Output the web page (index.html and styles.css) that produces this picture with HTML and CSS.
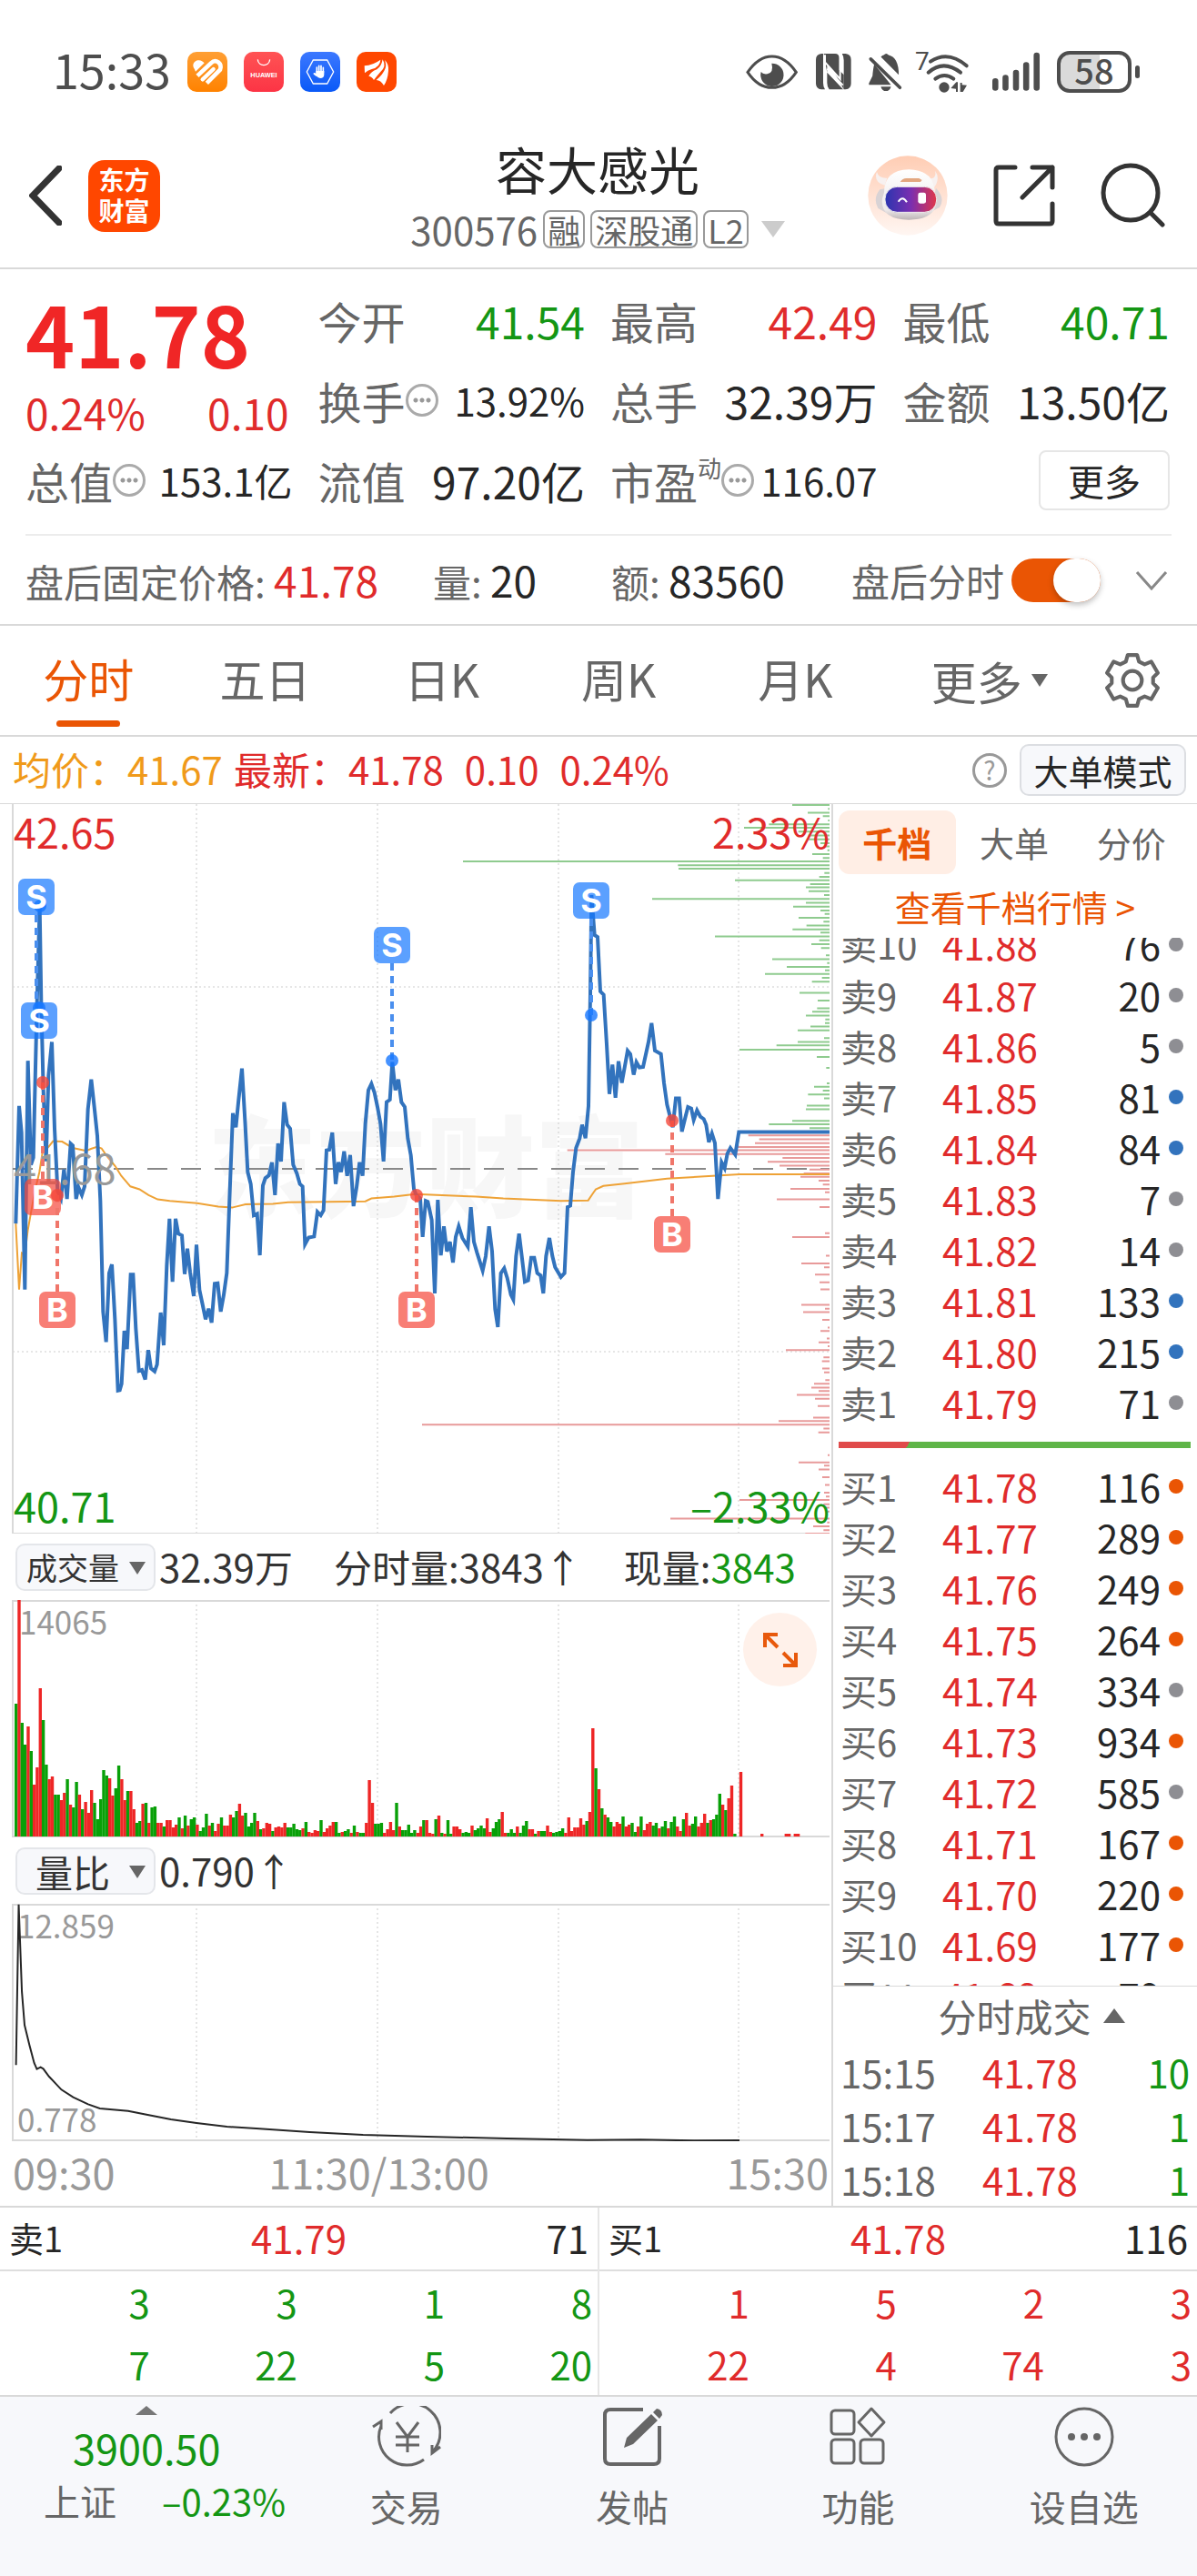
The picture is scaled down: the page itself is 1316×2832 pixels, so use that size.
FILE: index.html
```html
<!DOCTYPE html>
<html lang="zh-CN">
<head>
  <meta charset="UTF-8">
  <meta name="viewport" content="width=device-width, initial-scale=1.0">
  <title>容大感光 300576</title>
  <link rel="stylesheet" href="styles.css">
</head>
<body>
  <div class="status-bar">
    <div class="status-left">
      <span class="clock">15:33</span>
      <svg class="app-icon" viewBox="0 0 132 132">
        <defs><linearGradient id="gOrange" x1="0" y1="0" x2="0" y2="1"><stop offset="0" stop-color="#ff9f34"/><stop offset="1" stop-color="#ff8200"/></linearGradient></defs>
        <rect width="132" height="132" rx="30" fill="url(#gOrange)"/>
        <path d="M24 58C14 44 20 32 34 28c10-2 17 4 22 9L27 65Z" fill="#fff"/>
        <path d="M33 79 78 37q12-11 24-3 12 10 6 25L64 103" fill="none" stroke="#fff" stroke-width="14"/>
        <path d="M50 91 86 57" stroke="#fff" stroke-width="13" stroke-linecap="round"/>
      </svg>
      <svg class="app-icon" viewBox="0 0 132 132">
        <defs><linearGradient id="gRed" x1="0" y1="0" x2="0" y2="1"><stop offset="0" stop-color="#ff5354"/><stop offset="1" stop-color="#fc3445"/></linearGradient></defs>
        <rect width="132" height="132" rx="30" fill="url(#gRed)"/>
        <path d="M46 25c2 25 38 25 40 0" fill="none" stroke="#fff" stroke-width="4"/>
        <text class="tiny-brand" x="66" y="84" text-anchor="middle">HUAWEI</text>
      </svg>
      <svg class="app-icon" viewBox="0 0 132 132">
        <defs><linearGradient id="gBlue" x1="0" y1="0" x2="0" y2="1"><stop offset="0" stop-color="#3c78ff"/><stop offset="1" stop-color="#0a59f7"/></linearGradient></defs>
        <rect width="132" height="132" rx="30" fill="url(#gBlue)"/>
        <path d="M43 27H89L110 66 89 105H43L22 66Z" fill="none" stroke="#fff" stroke-width="4"/>
        <path d="M55 69V51M62 66V46M69 66V46M76 69V52M46 72l8 6" stroke="#fff" stroke-width="5" stroke-linecap="round"/>
        <path d="M52 63h27v12q0 12-13 12-8 0-13-9l-7-5q2-5 6-2Z" fill="#fff"/>
      </svg>
      <svg class="app-icon" viewBox="0 0 132 132">
        <rect width="132" height="132" rx="30" fill="#ff4700"/>
        <path d="M27 70 26 46Q54 44 79 26 78 50 50 57 36 61 27 70Z" fill="#fff"/>
        <path d="M40 80Q48 65 67 58 82 48 86 25 100 48 79 66 66 81 57 93 52 82 40 80Z" fill="#fff"/>
        <path d="M65 93Q88 74 95 54 99 42 93 27 107 40 105 62 103 92 90 111 80 93 65 93Z" fill="#fff"/>
      </svg>
    </div>
    <div class="status-right">
      <svg class="i-eye" viewBox="38 56 174 120">
        <path d="M44 117Q80 65 124 65t80 52Q170 168 124 168T44 117Z" fill="none" stroke="#4d4d4d" stroke-width="9"/>
        <path d="M88 116a38 38 0 1 0 35-28q8 30-14 35-15 2-21-7Z" fill="#4d4d4d"/>
      </svg>
      <svg class="i-nfc" viewBox="262 55 120 124">
        <path d="M289 58h-6q-18 2-18 20v78q0 18 18 20h12q-6-8-6-22Z" fill="#4d4d4d"/>
        <path d="M357 176h6q18-2 18-20V78q0-18-18-20h-12q6 8 6 22Z" fill="#4d4d4d"/>
        <path d="M291 58h37q14 0 14 16v62l-40-40v58q0 14 7 22h46L302 120M291 58l66 70v48" fill="#4d4d4d"/>
        <path d="M295 62v92q0 12 7 22M350 58q-6 8-5 20v64L295 86M302 108l52 54" fill="none" stroke="#fff" stroke-width="6"/>
      </svg>
      <svg class="i-bell" viewBox="432 52 116 130">
        <path d="M454 90q-4 14-6 40l-12 24v6h74ZM476 66q6-6 10-6 8-10 16 0 34 8 34 66Z" fill="#4d4d4d"/>
        <path d="m442 73 98 96" stroke="#4d4d4d" stroke-width="11" stroke-linecap="round"/>
        <path d="M476 166h34q-4 15-17 15t-17-15Z" fill="#4d4d4d"/>
      </svg>
      <svg class="i-wifi" viewBox="592 38 180 142">
        <text class="wifi-gen" x="592" y="105">7</text>
        <g fill="none" stroke="#4d4d4d" stroke-width="12" stroke-linecap="round">
          <path d="M643 76q58-38 119 14M636 112q50-44 106 0M659 133q30-22 60 0"/>
        </g>
        <circle cx="688" cy="161" r="17" fill="#4d4d4d"/>
        <path d="M710 164 728 144h5v32h-6v-10ZM741 146h6v7l16 1-13 22h-9Z" fill="#4d4d4d"/>
      </svg>
      <svg class="i-signal" viewBox="840 48 164 132">
        <path d="M853 146v22M887 135v33M922 118v50M956 92v76M991 60v108" stroke="#4d4d4d" stroke-width="20" stroke-linecap="round"/>
      </svg>
      <span class="battery">58</span>
    </div>
  </div>

  <header class="top-nav">
    <div class="nav-side">
      <a href="#" class="back" aria-label="返回"><svg viewBox="0 0 36 66"><path d="M33 3 4 33l29 30" fill="none" stroke="#333" stroke-width="7" stroke-linecap="round"/></svg></a>
      <a href="#" class="logo">东方<br>财富</a>
    </div>
    <div class="stock-title">
      <h1>容大感光</h1>
      <div class="stock-code">
        <span>300576</span><span class="tag">融</span><span class="tag">深股通</span><span class="tag">L2</span>
        <svg class="caret" viewBox="0 0 26 18"><path d="M0 0h26L13 18Z" fill="#ccc"/></svg>
      </div>
    </div>
    <div class="nav-side nav-right">
      <button class="icon-btn robot" aria-label="助手">
        <svg viewBox="430 398 264 264">
          <defs>
            <linearGradient id="gHalo" x1="0" y1="0" x2="0" y2="1"><stop offset="0" stop-color="#ffcdb4"/><stop offset="1" stop-color="#fff6f2"/></linearGradient>
            <linearGradient id="gFace" x1="0" y1="0" x2="1" y2="0"><stop offset="0" stop-color="#2b35b0"/><stop offset=".5" stop-color="#7a2fb0"/><stop offset="1" stop-color="#e0364a"/></linearGradient>
            <linearGradient id="gHelm" x1="0" y1="0" x2="0" y2="1"><stop offset="0" stop-color="#fff"/><stop offset=".8" stop-color="#eeeaea"/><stop offset="1" stop-color="#bcb4b6"/></linearGradient>
          </defs>
          <circle cx="562" cy="530" r="131" fill="url(#gHalo)"/>
          <path d="M470 510q-24 30-6 62l26 14v-80ZM655 505q32 34 12 64l-28 14Z" fill="#d9d3d5"/>
          <path d="M486 496q-38-10-26-44 6 22 34 20ZM636 474q22 0 16-26 18 24-2 54Z" fill="#f7f1f0"/>
          <path d="M484 520q0-74 82-76 82 2 86 76 22 88-86 90-96-2-88-70Z" fill="url(#gHelm)"/>
          <rect x="487" y="501" width="170" height="84" rx="40" fill="url(#gFace)" stroke="#eee" stroke-width="3"/>
          <path d="M531 550q14-22 28 2" fill="none" stroke="#fff" stroke-width="6"/>
          <rect x="596" y="520" width="26" height="36" rx="7" fill="#fff"/>
          <path d="M537 485q8-12 20-12h42l10 6-5 6Z" fill="#e3a780"/>
        </svg>
      </button>
      <button class="icon-btn share" aria-label="分享">
        <svg viewBox="0 0 68 68"><path d="M24 3H6Q3 3 3 6v56q0 3 3 3h56q3 0 3-3V43M43 3h22v22M65 3 32 36" fill="none" stroke="#333" stroke-width="5" stroke-linecap="round" stroke-linejoin="round"/></svg>
      </button>
      <button class="icon-btn search" aria-label="搜索">
        <svg viewBox="0 0 72 72"><circle cx="33" cy="33" r="30" fill="none" stroke="#333" stroke-width="5"/><path d="m55 55 13 13" stroke="#333" stroke-width="5" stroke-linecap="round"/></svg>
      </button>
    </div>
  </header>

  <section class="quote">
    <div class="price-box">
      <div class="price">41.78</div>
      <div class="change"><span>0.24%</span><span>0.10</span></div>
    </div>
    <div class="cell"><span>今开</span><b class="green">41.54</b></div>
    <div class="cell"><span>最高</span><b class="red">42.49</b></div>
    <div class="cell"><span>最低</span><b class="green">40.71</b></div>
    <div class="cell"><span>换手</span><i class="dots"></i><b class="small">13.92%</b></div>
    <div class="cell"><span>总手</span><b>32.39万</b></div>
    <div class="cell"><span>金额</span><b>13.50亿</b></div>
    <div class="cell"><span>总值</span><i class="dots"></i><b class="small">153.1亿</b></div>
    <div class="cell"><span>流值</span><b>97.20亿</b></div>
    <div class="cell"><span>市盈<sup>动</sup></span><i class="dots"></i><b class="small">116.07</b></div>
    <div class="cell"><button class="more-btn">更多</button></div>
  </section>

  <section class="after-hours">
    <span class="ah-price">盘后固定价格: <b class="red">41.78</b></span>
    <span class="ah-vol">量: <b>20</b></span>
    <span class="ah-amt">额: <b>83560</b></span>
    <label class="switch">盘后分时<input type="checkbox" checked></label>
    <svg class="chevron" viewBox="0 0 36 22"><path d="m2 2 16 18L34 2" fill="none" stroke="#888" stroke-width="3"/></svg>
  </section>

  <nav class="period-tabs">
    <a href="#" class="active">分时</a>
    <a href="#">五日</a>
    <a href="#">日K</a>
    <a href="#">周K</a>
    <a href="#">月K</a>
    <a href="#" class="more-tab">更多<svg viewBox="0 0 18 14"><path d="M0 0h18L9 14Z" fill="#666"/></svg></a>
    <button class="icon-btn gear" aria-label="设置">
      <svg viewBox="0 0 60 60"><path d="M25 3h10l2 7 6 3 7-3 7 12-5 5v6l5 5-7 12-7-3-6 3-2 7H25l-2-7-6-3-7 3L3 38l5-5v-6l-5-5 7-12 7 3 6-3Z" fill="none" stroke="#666" stroke-width="4" stroke-linejoin="round"/><circle cx="30" cy="30" r="10" fill="none" stroke="#666" stroke-width="4"/></svg>
    </button>
  </nav>

  <div class="avg-row">
    <span class="orange">均价：41.67</span>
    <span class="red">最新：41.78</span>
    <span class="red">0.10</span>
    <span class="red">0.24%</span>
    <span class="help">?</span>
    <button class="mode-btn">大单模式</button>
  </div>

  <main class="board">
    <div class="charts">
      <svg class="chart" id="price-chart" viewBox="0 0 914 802">
        <text class="watermark" x="228" y="445">东方财富</text>
        <path class="grid" d="M216 0V802M415 0V802M614 0V802M812 0V802M14 201H912M14 602H912"/>
        <path class="frame" d="M14 0V802H912"/>
        <path class="mid" d="M14 401H912"/>
        <svg width="914" height="802" viewBox="0 26 2742 1515" preserveAspectRatio="none">
          <path id="sell-depth" class="depth sell"/>
          <path id="buy-depth" class="depth buy"/>
          <polyline id="avg-line" class="avg-line"/>
          <polyline id="price-line" class="price-line"/>
        </svg>
        <text class="axis grey" x="15" y="418">41.68</text>
        <g id="markers"></g>
        <text class="axis up" x="15" y="49">42.65</text>
        <text class="axis down" x="15" y="790">40.71</text>
        <text class="axis up" x="912" y="49" text-anchor="end">2.33%</text>
        <text class="axis down" x="912" y="790" text-anchor="end">–2.33%</text>
      </svg>

      <div class="indicator">
        <label class="picker"><select aria-label="指标一"><option>成交量</option></select></label>
        <span>32.39万</span>
        <span class="ind-second">分时量:3843↑</span>
        <span class="ind-third">现量:<b class="green">3843</b></span>
      </div>
      <div class="chart-wrap">
        <svg class="chart" viewBox="0 0 914 261">
          <path class="grid" d="M216 0V260M415 0V260M614 0V260M812 0V260"/>
          <path class="frame" d="M912 1H14V260H912"/>
          <text class="axis-small" x="21" y="38">14065</text>
          <g id="volume"></g>
        </svg>
        <button class="expand" aria-label="全屏">
          <svg viewBox="0 0 40 40"><path d="M3 17V3h14M3 3l14 14M37 23v14H23M37 37 23 23" fill="none" stroke="#e8590c" stroke-width="4"/></svg>
        </button>
      </div>

      <div class="indicator">
        <label class="picker wide"><select aria-label="指标二"><option>量比</option></select></label>
        <span>0.790↑</span>
      </div>
      <svg class="chart" viewBox="0 0 914 261">
        <path class="grid" d="M216 0V260M415 0V260M614 0V260M812 0V260"/>
        <path class="frame" d="M912 1H14V260H912"/>
        <text class="axis-small" x="19" y="38">12.859</text>
        <text class="axis-small" x="19" y="251">0.778</text>
        <svg width="914" height="261" viewBox="0 250 1557 783" preserveAspectRatio="none">
          <polyline class="ratio-line" points="30,782 35,252 41,540 46,650 55,715 64,775 69,795 76,789 81,794 92,820 115,863 137,888 165,911 187,925 240,933 270,944 320,961 368,973 425,985 480,991 580,1003 680,1012 800,1018 950,1024 1100,1029 1200,1028 1300,1031 1385,1030"/>
        </svg>
      </svg>
      <div class="time-axis"><span>09:30</span><span>11:30/13:00</span><span>15:30</span></div>
    </div>

    <aside class="side">
      <div class="side-tabs">
        <button class="active">千档</button>
        <button>大单</button>
        <button>分价</button>
      </div>
      <a href="#" class="side-link">查看千档行情 &gt;</a>
      <div class="book">
        <table class="sell-table">
          <tr><td>卖10</td><td>41.88</td><td>76</td><td><i></i></td></tr>
          <tr><td>卖9</td><td>41.87</td><td>20</td><td><i></i></td></tr>
          <tr><td>卖8</td><td>41.86</td><td>5</td><td><i></i></td></tr>
          <tr><td>卖7</td><td>41.85</td><td>81</td><td><i class="blue-dot"></i></td></tr>
          <tr><td>卖6</td><td>41.84</td><td>84</td><td><i class="blue-dot"></i></td></tr>
          <tr><td>卖5</td><td>41.83</td><td>7</td><td><i></i></td></tr>
          <tr><td>卖4</td><td>41.82</td><td>14</td><td><i></i></td></tr>
          <tr><td>卖3</td><td>41.81</td><td>133</td><td><i class="blue-dot"></i></td></tr>
          <tr><td>卖2</td><td>41.80</td><td>215</td><td><i class="blue-dot"></i></td></tr>
          <tr><td>卖1</td><td>41.79</td><td>71</td><td><i></i></td></tr>
        </table>
        <div class="ratio-bar"></div>
        <table>
          <tr><td>买1</td><td>41.78</td><td>116</td><td><i class="orange-dot"></i></td></tr>
          <tr><td>买2</td><td>41.77</td><td>289</td><td><i class="orange-dot"></i></td></tr>
          <tr><td>买3</td><td>41.76</td><td>249</td><td><i class="orange-dot"></i></td></tr>
          <tr><td>买4</td><td>41.75</td><td>264</td><td><i class="orange-dot"></i></td></tr>
          <tr><td>买5</td><td>41.74</td><td>334</td><td><i></i></td></tr>
          <tr><td>买6</td><td>41.73</td><td>934</td><td><i class="orange-dot"></i></td></tr>
          <tr><td>买7</td><td>41.72</td><td>585</td><td><i></i></td></tr>
          <tr><td>买8</td><td>41.71</td><td>167</td><td><i class="orange-dot"></i></td></tr>
          <tr><td>买9</td><td>41.70</td><td>220</td><td><i class="orange-dot"></i></td></tr>
          <tr><td>买10</td><td>41.69</td><td>177</td><td><i class="orange-dot"></i></td></tr>
          <tr><td>买11</td><td>41.68</td><td>79</td><td></td></tr>
        </table>
      </div>
      <div class="deals">
        <button class="deals-title">分时成交<svg viewBox="0 0 24 16"><path d="M0 16h24L12 0Z" fill="#666"/></svg></button>
        <table>
          <tr><td>15:15</td><td>41.78</td><td>10</td></tr>
          <tr><td>15:17</td><td>41.78</td><td>1</td></tr>
          <tr><td>15:18</td><td>41.78</td><td>1</td></tr>
        </table>
      </div>
    </aside>
  </main>

  <section class="queue">
    <div class="queue-side">
      <div class="queue-head"><span>卖1</span><span class="red">41.79</span><span>71</span></div>
      <table class="green">
        <tr><td>3</td><td>3</td><td>1</td><td>8</td></tr>
        <tr><td>7</td><td>22</td><td>5</td><td>20</td></tr>
      </table>
    </div>
    <div class="queue-side">
      <div class="queue-head"><span>买1</span><span class="red">41.78</span><span>116</span></div>
      <table class="red">
        <tr><td>1</td><td>5</td><td>2</td><td>3</td></tr>
        <tr><td>22</td><td>4</td><td>74</td><td>3</td></tr>
      </table>
    </div>
  </section>

  <footer class="bottom-nav">
    <a href="#" class="index-box">
      <svg viewBox="0 0 24 10"><path d="M0 10h24L12 0Z" fill="#777"/></svg>
      <span class="index-value">3900.50</span>
      <span class="index-row"><span>上证</span><span class="green">–0.23%</span></span>
    </a>
    <a href="#" class="nav-item">
      <svg viewBox="0 0 76 68"><path d="M20 8A31 31 0 0 1 67 50M57 59A31 31 0 0 1 10 22M1 23l9-6v9M75 45l-9 7v-9" fill="none" stroke="#666" stroke-width="3"/><path d="m27 18 12 16 12-16M39 34v17M26 34h26M26 43h26" fill="none" stroke="#666" stroke-width="3"/></svg>
      交易
    </a>
    <a href="#" class="nav-item">
      <svg viewBox="0 0 68 68"><path d="M46 4H10q-6 0-6 6v48q0 6 6 6h48q6 0 6-6V22" fill="none" stroke="#666" stroke-width="4"/><path d="m25 46 3-11L55 9l7 7-27 26ZM57 7l4-4q6 1 6 7l-3 4Z" fill="#666"/></svg>
      发帖
    </a>
    <a href="#" class="nav-item">
      <svg viewBox="0 0 68 68"><g fill="none" stroke="#666" stroke-width="3"><rect x="5" y="5" width="25" height="26" rx="4"/><rect x="5" y="37" width="25" height="26" rx="4"/><rect x="37" y="37" width="25" height="26" rx="4"/><path d="M49 3 63 18 49 33 35 18Z" stroke-linejoin="round"/></g></svg>
      功能
    </a>
    <a href="#" class="nav-item">
      <svg viewBox="0 0 68 68"><circle cx="34" cy="34" r="31" fill="none" stroke="#666" stroke-width="3"/><circle cx="20" cy="34" r="4" fill="#666"/><circle cx="34" cy="34" r="4" fill="#666"/><circle cx="48" cy="34" r="4" fill="#666"/></svg>
      设自选
    </a>
  </footer>

  <script src="chart.js"></script>
</body>
</html>
```
FILE: styles.css
```css
* {
  margin: 0;
  padding: 0;
  box-sizing: border-box;
}

body {
  font-family: "Noto Sans CJK SC", "Noto Sans", sans-serif;
  font-size: 42px;
  line-height: 56px;
  background-color: #fff;
  color: #262626;
}

a {
  color: inherit;
  text-decoration: none;
}

button,
select,
input {
  font: inherit;
  color: inherit;
  border: none;
  background: none;
  appearance: none;
}

svg {
  display: block;
}

table {
  border-collapse: collapse;
}

b,
i {
  font-weight: normal;
  font-style: normal;
}

.red {
  color: #e02b2b;
}

.green {
  color: #149614;
}

.orange {
  color: #f09a1a;
}

/* Status bar */
.status-bar {
  display: flex;
  justify-content: space-between;
  align-items: center;
  height: 136px;
  padding: 22px 72px 0 58px;
  color: #4d4d4d;
}

.status-left {
  display: flex;
  align-items: center;
  gap: 18px;
}

.clock {
  padding-bottom: 6px;
  font-size: 52px;
}

.app-icon {
  width: 44px;
}

.tiny-brand {
  font: bold 22px "Liberation Sans", sans-serif;
  fill: #fff;
}

.status-right {
  display: flex;
  align-items: center;
  gap: 18px;
}

.i-eye {
  width: 58px;
}

.i-nfc {
  width: 40px;
}

.i-bell {
  width: 38px;
}

.i-wifi {
  width: 60px;
  margin-left: -4px;
  overflow: visible;
}

.wifi-gen {
  font: 84px Roboto, sans-serif;
  fill: #4d4d4d;
}

.i-signal {
  width: 54px;
  margin-left: 6px;
}

.battery {
  position: relative;
  width: 82px;
  height: 46px;
  border: 4px solid #4d4d4d;
  border-radius: 14px;
  background: linear-gradient(90deg, #dadada 58%, #fff 58%);
  font-size: 38px;
  font-weight: 500;
  line-height: 34px;
  text-align: center;
}

.battery::after {
  content: "";
  position: absolute;
  right: -13px;
  top: 12px;
  width: 5px;
  height: 14px;
  border-radius: 3px;
  background: #4d4d4d;
}

/* Header */
.top-nav {
  display: grid;
  grid-template-columns: 1fr auto 1fr;
  align-items: center;
  height: 160px;
  padding: 0 34px 0 32px;
  border-bottom: 2px solid #d9d9d9;
}

.nav-side {
  display: flex;
  align-items: center;
  gap: 29px;
}

.nav-right {
  justify-content: flex-end;
  gap: 50px;
}

.back svg {
  width: 36px;
}

.logo {
  width: 79px;
  height: 79px;
  padding-top: 4px;
  border-radius: 18px;
  background: #ff4700;
  color: #fff;
  font-size: 28px;
  font-weight: bold;
  line-height: 34px;
  text-align: center;
}

.stock-title {
  text-align: center;
}

h1 {
  font-size: 56px;
  font-weight: normal;
  line-height: 64px;
}

.stock-code {
  display: flex;
  align-items: center;
  gap: 6px;
  margin: 14px 0 4px;
  color: #666;
  line-height: 42px;
}

.tag {
  padding: 0 3px;
  border: 2px solid #999;
  border-radius: 8px;
  font-size: 36px;
  line-height: 38px;
}

.caret {
  width: 26px;
  margin-left: 8px;
}

.icon-btn {
  cursor: pointer;
}

.robot svg {
  width: 88px;
}

.share svg {
  width: 68px;
}

.search svg {
  width: 72px;
}

/* Quote figures */
.quote {
  display: grid;
  grid-template-columns: repeat(4, 1fr);
  grid-auto-rows: 88px;
  column-gap: 28px;
  margin: 0 28px;
  padding: 12px 2px 15px 0;
  border-bottom: 2px solid #ececec;
  font-size: 48px;
}

.price-box {
  grid-row: span 2;
  padding-right: 4px;
  color: #e02b2b;
}

.price {
  font-size: 92px;
  font-weight: bold;
  line-height: 114px;
  color: #f02626;
}

.change {
  display: flex;
  justify-content: space-between;
  font-size: 46px;
  line-height: 62px;
}

.cell {
  display: flex;
  align-items: center;
  color: #666;
  white-space: nowrap;
}

.cell b {
  margin-left: auto;
  color: #262626;
}

.cell b.red {
  color: #e02b2b;
}

.cell b.green {
  color: #149614;
}

.cell .small {
  font-size: 42px;
}

.cell sup {
  font-size: 26px;
  line-height: 0;
  vertical-align: 24px;
}

.dots {
  width: 36px;
  height: 36px;
  border: 3px solid #aaa;
  border-radius: 50%;
  background:
    radial-gradient(circle at 8px 15px, #999 2px, transparent 3px),
    radial-gradient(circle at 15px 15px, #999 2px, transparent 3px),
    radial-gradient(circle at 22px 15px, #999 2px, transparent 3px);
}

.more-btn {
  width: 144px;
  height: 66px;
  margin-left: auto;
  border: 2px solid #e6e6e6;
  border-radius: 8px;
  color: #262626;
  font-size: 40px;
  line-height: 58px;
}

/* After-hours line */
.after-hours {
  display: flex;
  align-items: center;
  height: 99px;
  padding: 0 32px 0 28px;
  border-bottom: 2px solid #d9d9d9;
  color: #666;
}

.after-hours b {
  font-size: 46px;
}

.after-hours b:not(.red) {
  color: #262626;
}

.ah-price {
  flex: 448;
}

.ah-vol {
  flex: 196;
}

.ah-amt {
  flex: 264;
}

.switch {
  display: flex;
  align-items: center;
  gap: 8px;
}

.switch input {
  display: flex;
  justify-content: flex-end;
  width: 98px;
  height: 48px;
  border-radius: 24px;
  background: #ea5504;
}

.switch input::before {
  content: "";
  width: 52px;
  height: 48px;
  border-radius: 24px;
  background: #fff;
  box-shadow: 0 3px 6px rgba(0, 0, 0, 0.25);
}

.switch input:not(:checked) {
  justify-content: flex-start;
  background: #ccc;
}

.chevron {
  width: 36px;
  margin-left: 38px;
}

/* Period tabs */
.period-tabs {
  display: flex;
  align-items: center;
  height: 122px;
  border-bottom: 2px solid #d9d9d9;
  color: #666;
  font-size: 50px;
}

.period-tabs a {
  display: flex;
  flex: 194;
  flex-direction: column;
  align-items: center;
  height: 120px;
  line-height: 114px;
}

.period-tabs .active {
  color: #ea5504;
}

.period-tabs .active::after {
  content: "";
  width: 70px;
  height: 7px;
  margin-top: -10px;
  border-radius: 4px;
  background: #ea5504;
}

.period-tabs .more-tab {
  flex: 232;
  flex-direction: row;
  justify-content: center;
  gap: 10px;
}

.more-tab svg {
  width: 18px;
}

.gear {
  margin: 0 40px 0 10px;
}

.gear svg {
  width: 62px;
}

/* Average and latest price */
.avg-row {
  display: flex;
  align-items: center;
  height: 74px;
  padding: 0 12px 0 14px;
  border-bottom: 1px solid #d9d9d9;
}

.avg-row .red,
.avg-row .orange {
  padding-bottom: 4px;
}

.avg-row .red {
  margin-right: 14px;
}

.avg-row .orange {
  margin-right: 12px;
}

.avg-row .red + .red {
  margin-left: 9px;
}

.help {
  width: 38px;
  height: 38px;
  margin-left: auto;
  margin-right: 14px;
  border: 3px solid #999;
  border-radius: 50%;
  color: #999;
  font-size: 28px;
  line-height: 30px;
  text-align: center;
}

.mode-btn {
  width: 183px;
  height: 57px;
  border: 2px solid #dcdee2;
  border-radius: 10px;
  background: #f7f8fb;
  font-size: 38px;
  line-height: 48px;
}

/* Charts */
.board {
  display: grid;
  grid-template-columns: minmax(0, 914fr) minmax(0, 402fr);
  border-bottom: 2px solid #d9d9d9;
}

.chart {
  width: 100%;
}

.grid {
  fill: none;
  stroke: #ccc;
  stroke-dasharray: 2 3;
}

.frame {
  fill: none;
  stroke: #d9d9d9;
  stroke-width: 2;
}

.mid {
  stroke: #888;
  stroke-width: 2;
  stroke-dasharray: 22 15;
}

.watermark {
  font-size: 120px;
  font-weight: 900;
  fill: #f7f7f7;
}

.axis {
  font-size: 45px;
}

.axis-small {
  font-size: 35px;
  fill: #999;
}

.up {
  fill: #e02b2b;
}

.down {
  fill: #149614;
}

.grey {
  fill: #999;
}

.depth,
.price-line,
.avg-line,
.ratio-line {
  fill: none;
  vector-effect: non-scaling-stroke;
}

.depth {
  stroke-width: 2;
}

.sell {
  stroke: #8fcb8f;
}

.buy {
  stroke: #e89a9a;
}

.price-line {
  stroke: #3273bd;
  stroke-width: 4;
}

.avg-line {
  stroke: #eea236;
  stroke-width: 2;
}

.ratio-line {
  stroke: #262626;
  stroke-width: 2;
}

.marker-s {
  fill: #1677ff;
  stroke: #4a8fee;
}

.marker-b {
  fill: #f5473a;
  stroke: #f0766a;
}

.stem {
  stroke-width: 4;
  stroke-dasharray: 8 6;
}

.badge {
  stroke: none;
  opacity: 0.7;
}

.dot {
  stroke: none;
  opacity: 0.8;
}

.marker-text {
  fill: #fff;
  stroke: none;
  font: bold 36px Inter, sans-serif;
}

.vol-up {
  fill: #ee2626;
}

.vol-down {
  fill: #08a008;
}

.indicator {
  display: flex;
  align-items: center;
  height: 73px;
  padding-left: 17px;
  color: #333;
  white-space: nowrap;
}

.indicator span {
  padding-bottom: 2px;
}

.picker {
  position: relative;
  margin-right: 4px;
}

.picker::after {
  content: "";
  position: absolute;
  right: 11px;
  top: 20px;
  border: 9px solid transparent;
  border-top: 14px solid #666;
  border-bottom: 0;
  pointer-events: none;
}

.picker select {
  display: block;
  width: 154px;
  height: 52px;
  padding-left: 10px;
  border: 2px solid #e4e6ea;
  border-radius: 10px;
  background: #f7f8fb;
  font-size: 34px;
  line-height: 44px;
}

.picker.wide select {
  padding-left: 20px;
  font-size: 41px;
}

.ind-second {
  margin-left: 45px;
}

.ind-third {
  margin-left: 46px;
}

.chart-wrap {
  position: relative;
}

.expand {
  position: absolute;
  right: 16px;
  top: 14px;
  display: grid;
  place-items: center;
  width: 81px;
  height: 81px;
  border-radius: 50%;
  background: #fff1ea;
}

.expand svg {
  width: 40px;
}

.time-axis {
  display: grid;
  grid-template-columns: 1fr auto 1fr;
  padding: 0 3px 0 14px;
  height: 71px;
  color: #999;
  font-size: 45px;
  line-height: 68px;
}

.time-axis span:nth-child(2) {
  padding-right: 92px;
}

.time-axis span:last-child {
  text-align: right;
}

/* Order book */
.side {
  border-left: 2px solid #d9d9d9;
}

.side-tabs {
  display: grid;
  grid-template-columns: repeat(3, 1fr);
  padding: 7px 8px 0 6px;
  color: #666;
  font-size: 38px;
}

.side-tabs button {
  height: 70px;
  border-radius: 12px;
  line-height: 66px;
}

.side-tabs .active {
  background: #ffeee5;
  color: #ea5504;
  font-weight: bold;
}

.side-link {
  display: block;
  height: 70px;
  color: #ea5504;
  font-size: 39px;
  line-height: 70px;
  text-align: center;
}

.book {
  height: 1153px;
  overflow: hidden;
  border-bottom: 1px solid #d9d9d9;
}

.book table {
  width: 100%;
  table-layout: fixed;
}

.book .sell-table {
  margin-top: -21px;
}

.book td {
  height: 56px;
  line-height: 56px;
}

.book td:nth-child(1) {
  width: 30%;
  padding-left: 8px;
  color: #666;
  font-size: 40px;
}

.book td:nth-child(2) {
  width: 30%;
  color: #e02b2b;
}

.book td:nth-child(3) {
  text-align: right;
}

.book td:nth-child(4) {
  width: 40px;
  padding-left: 9px;
}

.book i {
  display: block;
  width: 16px;
  height: 16px;
  border-radius: 50%;
  background: #8e8e93;
}

.book .blue-dot {
  background: #3273bd;
}

.book .orange-dot {
  background: #ea5504;
}

.ratio-bar {
  height: 7px;
  margin: 15px 7px 14px 6px;
  background: linear-gradient(120deg, #e04b4b 20%, #5fb548 20%);
}

.deals-title {
  display: flex;
  align-items: center;
  justify-content: center;
  gap: 13px;
  width: 100%;
  height: 64px;
  padding-left: 36px;
  color: #666;
}

.deals-title svg {
  width: 24px;
}

.deals table {
  width: 100%;
  table-layout: fixed;
}

.deals td {
  width: 160px;
  height: 59px;
  padding-left: 8px;
  color: #666;
  line-height: 59px;
}

.deals td:nth-child(2) {
  width: 120px;
  padding-left: 4px;
  color: #e02b2b;
}

.deals td:last-child {
  width: auto;
  padding-right: 8px;
  color: #149614;
  text-align: right;
}

/* Order queue */
.queue {
  display: flex;
  border-bottom: 2px solid #d9d9d9;
}

.queue-side {
  flex: 1;
}

.queue-side + .queue-side {
  border-left: 2px solid #e6e6e6;
}

.queue-head {
  display: grid;
  grid-template-columns: 1fr auto 1fr;
  height: 70px;
  padding: 0 10px;
  border-bottom: 2px solid #dedede;
  line-height: 66px;
}

.queue-head span:first-child {
  font-size: 38px;
}

.queue-head span:last-child {
  text-align: right;
}

.queue table {
  width: 100%;
  table-layout: fixed;
}

.queue td {
  height: 68px;
  padding-right: 6px;
  text-align: right;
}

.queue td:first-child {
  width: 26%;
}

/* Bottom navigation */
.bottom-nav {
  display: flex;
  height: 198px;
  padding-top: 10px;
  background: #f7f8fb;
  color: #666;
  font-size: 40px;
}

.index-box {
  flex: 322;
  display: flex;
  flex-direction: column;
  align-items: center;
}

.index-box svg {
  width: 24px;
}

.index-value {
  margin-top: 6px;
  color: #149614;
  font-size: 45px;
  line-height: 60px;
}

.index-row {
  display: flex;
  gap: 50px;
  padding-left: 48px;
  width: 100%;
  line-height: 56px;
}

.nav-item {
  flex: 248;
  display: flex;
  flex-direction: column;
  align-items: center;
  gap: 14px;
}

.nav-item svg {
  height: 68px;
}
```
FILE: chart.js
```js
var NS = 'http://www.w3.org/2000/svg';

// price line, one point per minute
var price = '52,897 63,653 71,708 82,1034 92,559 102,775 110,760 122,440 131,238 136,440 143,620 152,768 160,590 171,520 180,700 190,830 201,845 211,785 221,846 233,731 240,735 251,846 259,822 270,838 279,820 290,660 301,598 311,655 321,715 331,850 340,1080 350,1143 360,1000 369,982 379,1095 389,1244 395,1243 401,1230 410,1120 419,1158 431,1003 439,1003 448,1115 458,1203 468,1201 479,1221 489,1160 498,1198 510,1204 518,1190 530,1082 540,1150 550,985 559,887 569,1018 579,887 588,918 600,922 609,1002 618,949 627,998 639,1048 648,941 658,1035 668,1065 678,1096 688,1074 698,1103 708,1022 718,1021 728,1080 738,1045 748,1000 758,830 768,668 778,697 787,640 798,575 808,682 817,790 827,815 837,880 848,877 857,963 867,818 875,803 887,797 897,770 907,838 917,731 927,768 937,645 947,692 957,700 967,775 979,793 989,815 998,820 1006,940 1018,926 1036,924 1047,873 1058,880 1067,870 1077,745 1086,744 1096,708 1107,815 1116,770 1125,790 1135,747 1145,798 1155,755 1166,861 1176,822 1186,770 1196,798 1205,690 1215,620 1225,607 1235,625 1245,655 1255,690 1265,768 1275,645 1286,640 1294,562 1304,620 1314,598 1324,645 1335,655 1345,720 1355,755 1365,825 1373,838 1386,845 1394,925 1404,850 1411,852 1424,890 1434,1042 1444,848 1454,963 1464,903 1474,955 1484,935 1494,978 1503,925 1513,903 1525,927 1543,945 1553,863 1563,935 1573,957 1592,995 1602,965 1613,903 1623,955 1633,1075 1642,1112 1652,1000 1663,990 1673,1010 1685,1045 1693,1055 1702,965 1712,918 1722,970 1731,1018 1742,1015 1752,968 1762,968 1772,1000 1783,1005 1792,1042 1801,965 1812,927 1822,965 1831,988 1850,1008 1862,1000 1872,863 1881,860 1890,790 1900,740 1912,720 1920,692 1931,720 1941,653 1947,420 1951,215 1961,298 1971,302 1980,415 1991,422 2001,525 2010,628 2020,567 2030,636 2040,560 2051,605 2070,538 2079,545 2090,588 2099,562 2109,573 2121,572 2139,520 2149,481 2160,538 2180,545 2190,605 2200,650 2219,697 2229,637 2240,637 2249,706 2259,680 2269,655 2280,658 2288,682 2299,662 2310,675 2321,680 2329,692 2338,728 2348,710 2358,730 2368,846 2380,770 2390,782 2399,752 2409,740 2425,754 2437,707 2736,707';
var average = '52,897 63,1034 72,958 82,960 92,910 102,875 115,830 130,790 140,750 160,738 175,726 205,727 240,740 285,746 300,742 320,738 335,741 350,755 380,778 400,798 430,820 460,826 490,838 520,847 560,850 650,855 720,862 765,864 810,857 900,856 950,853 1080,852 1205,851 1225,845 1300,841 1370,836 1440,838 1570,841 1660,845 1850,850 1940,849 1955,835 1965,826 1990,819 2060,814 2200,804 2350,798 2440,795 2736,795';

document.getElementById('price-line').setAttribute('points', price);
document.getElementById('avg-line').setAttribute('points', average);

// order depth: level:length
var sellDepth = '28:123 36:5 44:72 51:22 60:5 68:200 75:282 83:103 91:70 99:70 107:30 114:14 122:7 130:57 138:22 145:1209 153:500 160:498 169:17 177:34 184:312 192:64 199:78 207:69 215:18 223:585 231:78 239:120 247:30 254:16 262:102 270:20 278:76 286:122 293:30 301:378 309:34 317:60 325:28 340:12 348:189 356:8 364:141 371:15 379:213 387:25 395:58 418:99 434:39 450:41 457:57 465:78 473:14 481:15 488:63 496:105 512:18 520:105 527:175 536:297 551:42 574:11 606:9 613:51 621:22 629:71 637:18 652:75 660:78 684:123 691:200 699:66';
var buyDepth = '707:105 714:268 722:232 730:246 738:305 745:865 753:542 761:155 769:204 777:165 785:66 793:85 800:96 808:36 816:22 825:129 832:15 847:174 863:33 917:15 925:123 964:12 980:93 988:18 1003:48 1019:33 1034:30 1066:93 1074:15 1081:87 1097:24 1113:6 1120:30 1136:9 1144:36 1152:6 1160:144 1175:20 1183:25 1198:24 1206:18 1222:14 1230:51 1238:60 1245:36 1253:108 1261:48 1276:39 1300:54 1307:168 1315:1344 1323:20 1331:37 1378:6 1393:102 1400:18 1408:36 1424:24 1440:15 1456:18 1464:12 1471:297 1480:20 1487:15 1495:6 1510:525 1518:8 1526:54 1534:20 1541:80';

function depthPath(text) {
  return text.split(' ').map(function (item) {
    var p = item.split(':');
    return 'M' + (2736 - p[1]) + ' ' + p[0] + 'H2736';
  }).join('');
}

document.getElementById('sell-depth').setAttribute('d', depthPath(sellDepth));
document.getElementById('buy-depth').setAttribute('d', depthPath(buyDepth));

function add(parent, name, attrs, text) {
  var el = document.createElementNS(NS, name);
  for (var key in attrs) {
    el.setAttribute(key, attrs[key]);
  }
  if (text) {
    el.textContent = text;
  }
  parent.appendChild(el);
  return el;
}

// trade markers: type, badge x, badge y, dot x, dot y
var markers = [
  ['S', 40, 102, 44, 112],
  ['S', 43, 238, 43, 224],
  ['B', 47, 432, 47, 306],
  ['B', 63, 556, 63, 430],
  ['S', 431, 155, 431, 282],
  ['B', 458, 556, 458, 430],
  ['S', 650, 106, 650, 232],
  ['B', 739, 473, 739, 348]
];
var box = document.getElementById('markers');
add(box, 'path', { 'class': 'stem marker-s', d: 'M40 122V218' });
markers.forEach(function (m) {
  var g = add(box, 'g', { 'class': m[0] === 'S' ? 'marker-s' : 'marker-b' });
  var side = m[2] > m[4] ? -20 : 20;
  if (Math.abs(m[2] - m[4]) > 30) {
    add(g, 'path', { 'class': 'stem', d: 'M' + m[3] + ' ' + (m[2] + side) + 'V' + m[4] });
  }
  add(g, 'circle', { 'class': 'dot', cx: m[3], cy: m[4], r: 7 });
  add(g, 'rect', { 'class': 'badge', x: m[1] - 20, y: m[2] - 20, width: 40, height: 40, rx: 7 });
  add(g, 'text', { 'class': 'marker-text', x: m[1], y: m[2] + 13, 'text-anchor': 'middle' }, m[0]);
});

// volume per minute, r = up, g = down, - = empty
var volume = 'g438 r780 g376 g302 r363 g283 r170 r227 r490 g383 g236 r188 r199 g137 g139 r121 r143 g190 r106 g95 g181 r137 g90 r113 r77 r154 g112 g56 g122 g220 g202 r193 r136 g160 g234 r188 r121 g149 r151 r89 g46 g51 r107 g112 r45 g95 g100 r44 r46 g32 r53 r53 r30 r39 g62 r26 g68 r35 g56 g64 r40 g17 g30 g76 r36 g46 r17 r42 g64 r37 r35 r73 g64 g84 r107 r68 g79 g33 g44 g77 r52 g25 r28 r46 r41 g19 r31 r34 r31 r45 g29 g31 g41 g23 g22 r28 g48 r14 r12 r22 r18 g55 r14 r28 r36 r49 g48 g12 r14 g18 g23 r12 g36 r16 g12 g12 r46 r186 r110 g41 g42 g44 r12 r25 r49 r22 g110 r33 g22 g22 g38 g12 g22 r12 r34 g55 r54 r12 r10 g58 r68 g12 r10 g55 g10 r32 r34 r25 g12 g16 g12 r36 g20 g27 g36 g28 r60 r14 g26 g48 g56 r82 r12 g12 g25 g12 r32 g12 g35 g50 r24 r25 g10 r18 g17 g18 r35 r16 g12 g14 g17 g28 r12 r62 r18 r30 r30 r61 r40 g50 r82 r358 g225 r157 g94 r72 g64 g48 r34 r48 r42 g66 r32 r40 g46 g15 r33 g66 r20 r42 r48 g36 g46 r28 g33 g52 r26 g48 g66 r32 r18 g58 r78 r36 g42 g66 r34 r44 r74 g44 r54 g56 g72 g142 r106 g88 r126 r168 g10 - r212 - - - - - - r10 - - - - - - - r10 r10 - r10 r10'.split(' ');
var vol = document.getElementById('volume');
volume.forEach(function (item, i) {
  if (item === '-') {
    return;
  }
  var h = Math.round(item.slice(1) / 3);
  add(vol, 'rect', {
    'class': item[0] === 'r' ? 'vol-up' : 'vol-down',
    x: (16 + i * 3.32).toFixed(1), y: 260 - h, width: 3.4, height: h
  });
});
```
